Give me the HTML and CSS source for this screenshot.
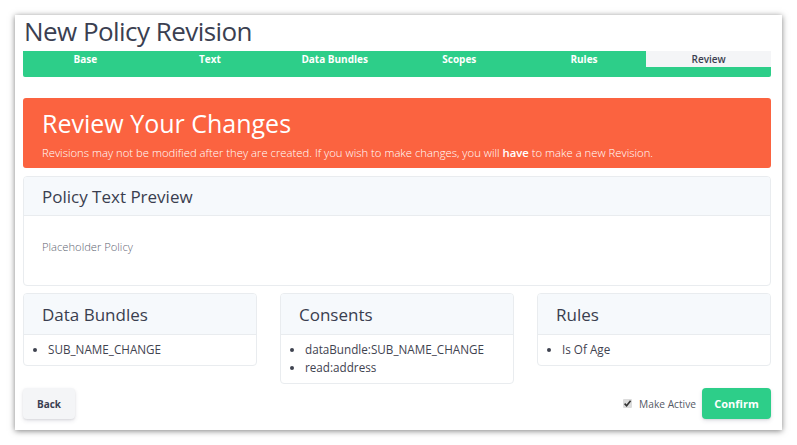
FILE: index.html
```html
<!DOCTYPE html>
<html lang="en">
<head>
<meta charset="utf-8">
<title>New Policy Revision</title>
<link rel="stylesheet" href="styles.css">
</head>
<body>
<div class="window">
  <h1 class="page-title">New Policy Revision</h1>
  <nav class="tabs">
    <div class="tab-row">
      <span class="tab">Base</span>
      <span class="tab">Text</span>
      <span class="tab">Data Bundles</span>
      <span class="tab">Scopes</span>
      <span class="tab">Rules</span>
      <span class="tab tab-active">Review</span>
    </div>
  </nav>

  <div class="alert">
    <h2 class="alert-title">Review Your Changes</h2>
    <p class="alert-text">Revisions may not be modified after they are created. If you wish to make changes, you will <b>have</b> to make a new Revision.</p>
  </div>

  <section class="card preview">
    <header class="card-header"><h3 class="card-title">Policy Text Preview</h3></header>
    <div class="preview-body">Placeholder Policy</div>
  </section>

  <div class="cards-row">
    <section class="card">
      <header class="card-header small"><h3 class="card-title">Data Bundles</h3></header>
      <ul class="card-list">
        <li>SUB_NAME_CHANGE</li>
      </ul>
    </section>
    <section class="card">
      <header class="card-header small"><h3 class="card-title">Consents</h3></header>
      <ul class="card-list">
        <li>dataBundle:SUB_NAME_CHANGE</li>
        <li>read:address</li>
      </ul>
    </section>
    <section class="card">
      <header class="card-header small"><h3 class="card-title">Rules</h3></header>
      <ul class="card-list">
        <li>Is Of Age</li>
      </ul>
    </section>
  </div>

  <div class="actions">
    <button class="btn btn-back" type="button">Back</button>
    <div class="actions-right">
      <label class="check">
        <span class="check-box"><svg width="9" height="9" viewBox="0 0 9 9"><path d="M1.6 4.6 L3.6 6.8 L7.6 1.8" fill="none" stroke="#333" stroke-width="1.6"/></svg></span>
        <span class="check-label">Make Active</span>
      </label>
      <button class="btn btn-confirm" type="button">Confirm</button>
    </div>
  </div>
</div>
</body>
</html>
```

FILE: styles.css
```css
* { box-sizing: border-box; }

html, body {
  margin: 0;
  padding: 0;
  background: #ffffff;
}

body {
  font-family: "Open Sans", "Noto Sans", sans-serif;
  color: #3b3f51;
}

.window {
  margin: 15px;
  width: 767px;
  height: 415px;
  padding: 0 11px 0 8px;
  background: #ffffff;
  box-shadow: 0 1px 6px rgba(0, 0, 0, 0.5);
}

.page-title {
  margin: 0;
  font-size: 26px;
  letter-spacing: -0.55px;
  font-weight: 400;
  line-height: 32px;
  padding: 0 0 4px 1px;
  color: #3b3f51;
}

.tabs {
  background: #2dce89;
  padding-bottom: 10px;
  border-radius: 0 0 2px 2px;
}

.tab-row {
  display: grid;
  grid-template-columns: repeat(6, 1fr);
}

.tab {
  text-align: center;
  font-size: 10px;
  font-weight: 700;
  line-height: 16px;
  color: #ffffff;
}

.tab-active {
  background: #f4f5f7;
  color: #3b3f51;
  font-weight: 600;
}

.alert {
  margin-top: 21px;
  background: #fb6340;
  border-radius: 3px;
  padding: 10px 19px 7px;
  color: #ffffff;
}

.alert-title {
  margin: 0;
  font-size: 25px;
  font-weight: 400;
  line-height: 31px;
}

.alert-text {
  margin: 6px 0 0;
  font-size: 11.3px;
  line-height: 16px;
  font-weight: 300;
}

.alert-text b { font-weight: 600; }

.card {
  background: #ffffff;
  border: 1px solid #e9ecef;
  border-radius: 4px;
  overflow: hidden;
}

.preview {
  margin-top: 8px;
}

.card-header {
  background: #f6f9fc;
  border-bottom: 1px solid #e9ecef;
  height: 39px;
  padding: 0 18px;
  display: flex;
  align-items: center;
}

.card-header.small {
  height: 41px;
}

.card-title {
  margin: 0;
  font-size: 17px;
  font-weight: 400;
  color: #3a3e4f;
}

.preview-body {
  height: 69px;
  padding: 0 18px 8px;
  display: flex;
  align-items: center;
  font-size: 11.2px;
  font-weight: 300;
  color: #5f6673;
}

.cards-row {
  margin-top: 7px;
  display: grid;
  grid-template-columns: repeat(3, 1fr);
  gap: 23px;
  align-items: start;
}

.card-list {
  margin: 0;
  padding: 5px 0 7px 24px;
  font-size: 11.7px;
  line-height: 18px;
  color: #3f4350;
}

.actions {
  margin-top: 4px;
  display: flex;
  justify-content: space-between;
  align-items: center;
}

.actions-right {
  display: flex;
  align-items: center;
}

.btn {
  height: 31px;
  border: 0;
  border-radius: 4px;
  font-family: "Open Sans", "Noto Sans", sans-serif;
  font-weight: 700;
  cursor: pointer;
  box-shadow: 0 2px 4px rgba(50, 50, 93, 0.12), 0 1px 2px rgba(0, 0, 0, 0.08);
}

.btn-back {
  width: 52px;
  background: #f4f5f7;
  color: #3b3f51;
  font-size: 10px;
}

.btn-confirm {
  width: 69px;
  background: #2dce89;
  color: #ffffff;
  font-size: 11px;
}

.check {
  display: flex;
  align-items: center;
  margin-right: 6px;
}

.check-box {
  width: 9px;
  height: 9px;
  border-radius: 1px;
  background: #dcdcdc;
  display: flex;
  align-items: center;
  justify-content: center;
  margin-right: 7px;
}

.check-label {
  font-size: 10.2px;
  color: #555a66;
  font-weight: 400;
}
```
